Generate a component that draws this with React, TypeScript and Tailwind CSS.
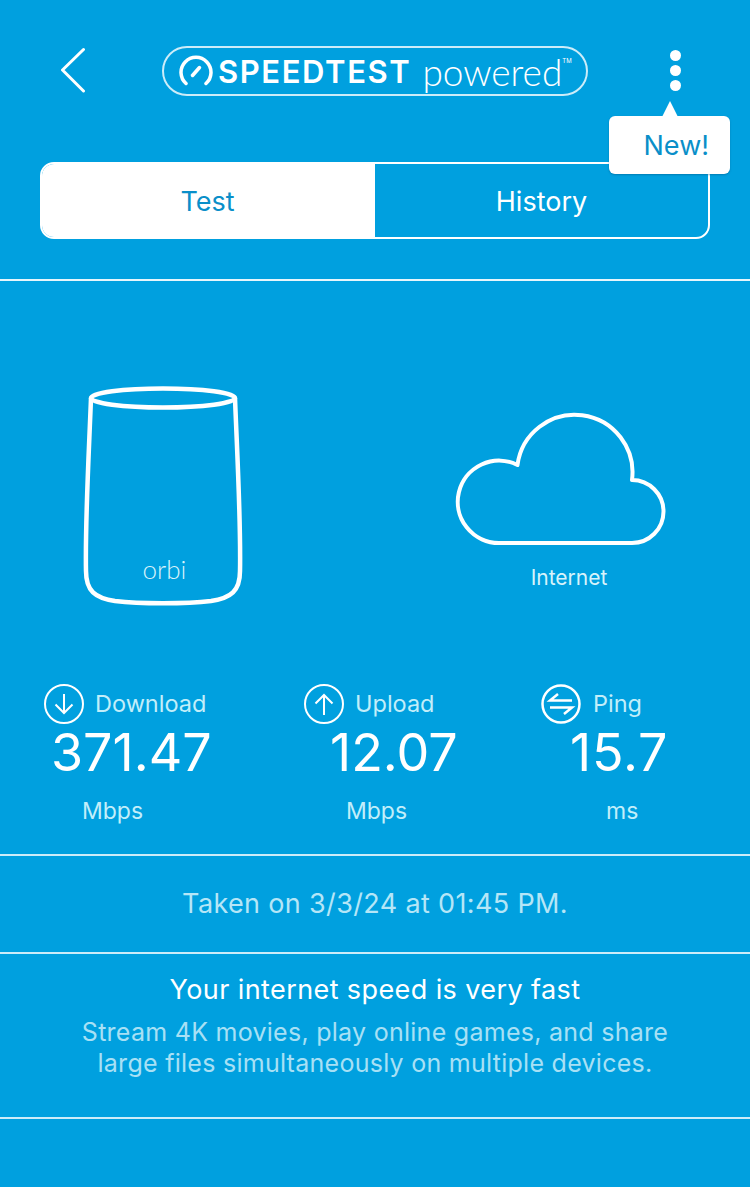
function BackChevron() {
  return (
    <svg width="26" height="46" viewBox="0 0 26 46" fill="none" stroke="white" strokeWidth="3" strokeLinecap="round" strokeLinejoin="round">
      <path d="M23.500 2.500L2.500 23L23.500 44" />
    </svg>
  );
}

function SpeedtestPill() {
  return (
    <div className="flex h-[50px] w-[426px] items-center rounded-full border-2 border-white/80 pl-[15px]">
      <svg width="34" height="34" viewBox="0 0 34 34" fill="none" stroke="white" strokeWidth="3.500" strokeLinecap="round">
        <path d="M7 29.500A15 15 0 1 1 27 29.500" />
        <path d="M13.500 21.500L20.500 13.500" />
      </svg>
      <span className="ml-[5px] text-[31px] leading-none font-semibold tracking-[1.6px] text-white">SPEEDTEST</span>
      <span className="ml-[11px] text-[37px] leading-none font-light text-white [font-family:Lato,sans-serif]">powered</span>
      <span className="mb-[20px] text-[6px] leading-none text-white">TM</span>
    </div>
  );
}

function RouterIcon() {
  return (
    <svg width="162" height="224" viewBox="82 383 162 224" fill="none" stroke="white" strokeWidth="4.500" strokeLinejoin="round">
      <ellipse cx="163" cy="397" rx="72" ry="9.500" />
      <path d="M91 397C89 450 85 520 86 570C86 590 95 597 115 600C140 603 186 603 211 600C231 597 240 590 240 570C241 520 237 450 235 397" />
      <text x="164.500" y="578" textAnchor="middle" fill="#d8f3fb" stroke="none" fontSize="26" fontWeight="300" fontFamily="Lato, sans-serif">
        orbi
      </text>
    </svg>
  );
}

function CloudIcon() {
  return (
    <svg width="214" height="136" viewBox="454 412 214 136" fill="none" stroke="white" strokeWidth="4">
      <path d="M517.500 466A57.700 57.700 0 0 1 632 481A31.500 31.500 0 0 1 632 544H499A41.200 41.200 0 1 1 517.500 466Z" strokeLinejoin="round" />
    </svg>
  );
}

function DownloadIcon() {
  return (
    <svg width="40" height="40" viewBox="0 0 40 40" fill="none" stroke="white" strokeWidth="2">
      <circle cx="20" cy="20" r="19" />
      <path d="M20 10V29M11.500 20.500L20 29L28.500 20.500" />
    </svg>
  );
}

function UploadIcon() {
  return (
    <svg width="40" height="40" viewBox="0 0 40 40" fill="none" stroke="white" strokeWidth="2">
      <circle cx="20" cy="20" r="19" />
      <path d="M20 31V11M11.500 19.500L20 11L28.500 19.500" />
    </svg>
  );
}

function PingIcon() {
  return (
    <svg width="40" height="40" viewBox="0 0 40 40" fill="none" stroke="white" strokeWidth="2.500">
      <circle cx="20" cy="20" r="18.500" />
      <path d="M31 16.500H9L17 10M9 23.500H31L23 30" />
    </svg>
  );
}

export default function App() {
  return (
    <div className="relative h-[1187px] w-[750px] overflow-hidden bg-[#00a0df] [font-family:Inter,sans-serif]">
      {/* top bar */}
      <div className="flex h-[96px] items-end">
        <div className="flex h-[50px] items-center">
          <div className="ml-[60px] -mt-[2px]">
            <BackChevron />
          </div>
          <div className="ml-[76px]">
            <SpeedtestPill />
          </div>
          <div className="ml-[82px] -mt-[2px] flex flex-col gap-[4px]">
            <span className="size-[11px] rounded-full bg-white" />
            <span className="size-[11px] rounded-full bg-white" />
            <span className="size-[11px] rounded-full bg-white" />
          </div>
        </div>
      </div>

      {/* New! tooltip */}
      <div className="absolute top-[116px] left-[609px] flex h-[58px] w-[121px] items-center justify-end rounded-[6px] bg-white pt-[2px] pr-[21px] text-[27px] text-[#0a8fc9] shadow-[0_1px_2px_rgba(0,60,100,0.35)]">
        New!
        <span className="absolute -top-[15px] left-[53px] h-0 w-0 border-x-[8px] border-b-[16px] border-x-transparent border-b-white" />
      </div>

      {/* Test / History tabs */}
      <div className="mx-[40px] mt-[66px] flex h-[77px] overflow-hidden rounded-[14px] border-2 border-white text-[27px]">
        <div className="flex w-[333px] items-center justify-center bg-white pt-[4px] pr-[2px] text-[#0a8fc9]">Test</div>
        <div className="flex flex-1 items-center justify-center pt-[4px] text-white">History</div>
      </div>

      <div className="mt-[40px] h-[2px] bg-white/90" />

      {/* devices */}
      <div className="flex pt-[103px]">
        <div className="ml-[82px]">
          <RouterIcon />
        </div>
        <div className="ml-[210px] -mt-[2px] flex flex-col items-center pt-[29px]">
          <CloudIcon />
          <span className="mt-[19px] ml-[16px] text-[21px] leading-[24px] text-[#d8f3fb]">Internet</span>
        </div>
      </div>

      {/* results */}
      <div className="mt-[76px] flex h-[170px]">
        <div className="ml-[44px] w-[260px]">
          <div className="flex items-center gap-[11px] text-[23.500px] text-[#c2eefa]">
            <DownloadIcon />
            Download
          </div>
          <div className="ml-[7px] -mt-[1px] text-[52px] leading-[60px] text-white">371.47</div>
          <div className="mt-[14px] ml-[38px] text-[23px] leading-[28px] text-[#c2eefa]">Mbps</div>
        </div>
        <div className="w-[237px]">
          <div className="flex items-center gap-[11px] text-[23.500px] text-[#c2eefa]">
            <UploadIcon />
            Upload
          </div>
          <div className="ml-[26px] -mt-[1px] text-[52px] leading-[60px] text-white">12.07</div>
          <div className="mt-[14px] ml-[42px] text-[23px] leading-[28px] text-[#c2eefa]">Mbps</div>
        </div>
        <div className="flex-1">
          <div className="flex items-center gap-[12px] text-[23.500px] text-[#c2eefa]">
            <PingIcon />
            Ping
          </div>
          <div className="ml-[29px] -mt-[1px] text-[52px] leading-[60px] tracking-[0.8px] text-white">15.7</div>
          <div className="mt-[14px] ml-[65px] text-[23px] leading-[28px] text-[#c2eefa]">ms</div>
        </div>
      </div>

      <div className="h-[2px] bg-white/80" />
      <div className="flex h-[96px] items-center justify-center text-[27px] tracking-[0.35px] text-[#b5e6f7]">Taken on 3/3/24 at 01:45 PM.</div>
      <div className="h-[2px] bg-white/80" />

      <div className="flex h-[163px] flex-col items-center pt-[18px]">
        <div className="text-[27px] leading-[36px] tracking-[0.4px] text-white">Your internet speed is very fast</div>
        <div className="mt-[9px] text-center text-[25px] leading-[31px] tracking-[0.27px] text-[#a8e0f5]">
          Stream 4K movies, play online games, and share
          <br />
          large files simultaneously on multiple devices.
        </div>
      </div>
      <div className="h-[2px] bg-white/80" />
    </div>
  );
}
